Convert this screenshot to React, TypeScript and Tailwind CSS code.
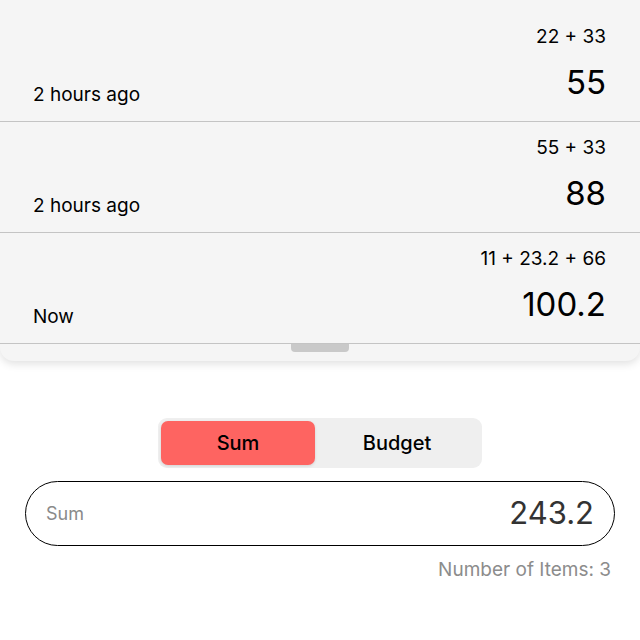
import React from 'react';

const entries = [
  { expr: '22 + 33', total: '55', when: '2 hours ago' },
  { expr: '55 + 33', total: '88', when: '2 hours ago' },
  { expr: '11 + 23.2 + 66', total: '100.2', when: 'Now' },
];

const App: React.FC = () => {
  return (
    <div className="w-[640px] h-[640px] overflow-hidden bg-white text-black" style={{ fontFamily: 'Inter, "Noto Sans", sans-serif' }}>
      {/* History sheet */}
      <div className="bg-[#f5f5f5] rounded-b-[14px] shadow-[0_3px_8px_rgba(0,0,0,0.12)] overflow-hidden">
        <div className="-mt-[12px]">
          {entries.map((e, i) => (
            <div key={i} className="h-[111px] border-b border-[#c4c4c4] flex items-end justify-between pl-[33px] pr-[34px] pb-[22px] first:h-[134px]">
              <span className="text-[19px] leading-none -mb-[5px]">{e.when}</span>
              <div className="flex flex-col items-end">
                <span className="text-[19px] leading-none mb-[20px]">{e.expr}</span>
                <span className="text-[33px] leading-none">{e.total}</span>
              </div>
            </div>
          ))}
        </div>
        <div className="h-[17px] flex justify-center">
          <div className="w-[58px] h-[8px] rounded-b-[4px] bg-[#c9c9c9]" />
        </div>
      </div>

      {/* Mode switch */}
      <div className="flex justify-center mt-[57px]">
        <div className="w-[324px] h-[50px] bg-[#efefef] rounded-[9px] p-[3px] flex">
          <button className="w-[154px] rounded-[7px] bg-[#fe6461] text-[20px] font-medium text-black shadow-[0_1px_3px_rgba(0,0,0,0.12)]">Sum</button>
          <button className="flex-1 text-[20px] font-medium text-black">Budget</button>
        </div>
      </div>

      {/* Total field */}
      <div className="mx-[25px] mt-[13px] h-[65px] rounded-full border-[1.5px] border-black flex items-center justify-between pl-[20px] pr-[20px]">
        <span className="text-[18px] text-[#8a8a8a]">Sum</span>
        <span className="text-[31px] text-[#333333]">243.2</span>
      </div>

      <div className="flex justify-end pr-[29px] mt-[10px]">
        <span className="text-[19px] text-[#8c8c8c]">Number of Items: 3</span>
      </div>
    </div>
  );
};

export default App;
